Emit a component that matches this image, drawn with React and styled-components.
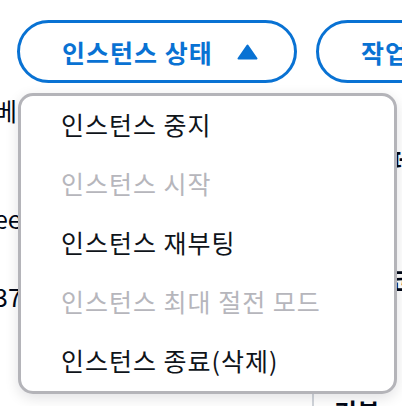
import React from 'react';
import styled, { createGlobalStyle } from 'styled-components';

const Global = createGlobalStyle`
  html, body { margin: 0; padding: 0; background: #ffffff; }
  body { font-family: "Noto Sans CJK KR", "Noto Sans", sans-serif; }
`;

const Page = styled.div`
  position: relative;
  width: 402px;
  height: 406px;
  overflow: hidden;
  background: #ffffff;
`;

const Toolbar = styled.div`
  display: flex;
  gap: 19px;
  padding-top: 20px;
  margin-left: -102px;
`;

const PillButton = styled.button`
  flex: none;
  box-sizing: border-box;
  width: ${p => p.$w}px;
  height: 63px;
  border: 3px solid #0972d3;
  border-radius: 32px;
  background: #ffffff;
  color: #0972d3;
  font-family: inherit;
  font-size: 25px;
  font-weight: 700;
  letter-spacing: 1px;
  display: flex;
  align-items: center;
  justify-content: ${p => (p.$start ? 'flex-start' : 'center')};
  padding: 0 0 0 ${p => (p.$start ? 42 : 0)}px;
  gap: 24px;
`;

const Caret = styled.svg`
  width: 21px;
  height: 16px;
  margin-top: 1px;
`;

const Behind = styled.div`
  display: grid;
  grid-template-columns: 30px 1fr 30px;
  margin-top: 12px;
  font-size: 25px;
  color: #000716;
`;

const LeftCol = styled.div`
  display: flex;
  flex-direction: column;
  margin-left: -6px;
`;

const Clip = styled.div`
  height: ${p => p.$h}px;
  line-height: ${p => p.$h}px;
  white-space: nowrap;
`;

const RightCol = styled.div`
  display: flex;
  flex-direction: column;
  margin-left: 14px;
  font-weight: 700;
`;

const Footer = styled.div`
  position: absolute;
  left: 312px;
  top: 394px;
  display: flex;
  font-size: 25px;
  font-weight: 700;
  color: #000716;
  border-left: 2px solid #d1d5db;
  padding-left: 20px;
  line-height: 34px;
`;

const Menu = styled.ul`
  position: absolute;
  left: 18px;
  top: 93px;
  box-sizing: border-box;
  width: 379px;
  margin: 0;
  padding: 0;
  list-style: none;
  background: #ffffff;
  border: 3px solid #b4b4b9;
  border-radius: 15px;
  box-shadow: 0 4px 14px rgba(0, 7, 22, 0.12);
`;

const Item = styled.li`
  box-sizing: border-box;
  height: 59px;
  display: flex;
  align-items: center;
  padding: 0 0 4px 40px;
  font-size: 25px;
  letter-spacing: 1px;
  color: ${p => (p.$disabled ? '#b6b6bc' : '#0f141a')};
`;

const items = [
  { label: '인스턴스 중지' },
  { label: '인스턴스 시작', disabled: true },
  { label: '인스턴스 재부팅' },
  { label: '인스턴스 최대 절전 모드', disabled: true },
  { label: '인스턴스 종료(삭제)' },
];

export default function App() {
  return (
    <Page>
      <Global />
      <Toolbar>
        <PillButton $w={100}>연결</PillButton>
        <PillButton $w={280} $start>
          인스턴스 상태
          <Caret viewBox="0 0 21 16">
            <path d="M10.5 1.5 L19.5 14.5 H1.5 Z" fill="#0972d3" stroke="#0972d3" strokeWidth="2" strokeLinejoin="round" />
          </Caret>
        </PillButton>
        <PillButton $w={140} $start>작업</PillButton>
      </Toolbar>
      <Behind>
        <LeftCol>
          <Clip $h={30}>베이</Clip>
          <Clip $h={78} />
          <Clip $h={30}>ee</Clip>
          <Clip $h={48} />
          <Clip $h={30}>37</Clip>
        </LeftCol>
        <div />
        <RightCol>
          <Clip $h={50} />
          <Clip $h={30}>퍼</Clip>
          <Clip $h={90} />
          <Clip $h={30}>코</Clip>
        </RightCol>
      </Behind>
      <Footer>기본값</Footer>
      <Menu>
        {items.map(it => (
          <Item key={it.label} $disabled={it.disabled}>{it.label}</Item>
        ))}
      </Menu>
    </Page>
  );
}
